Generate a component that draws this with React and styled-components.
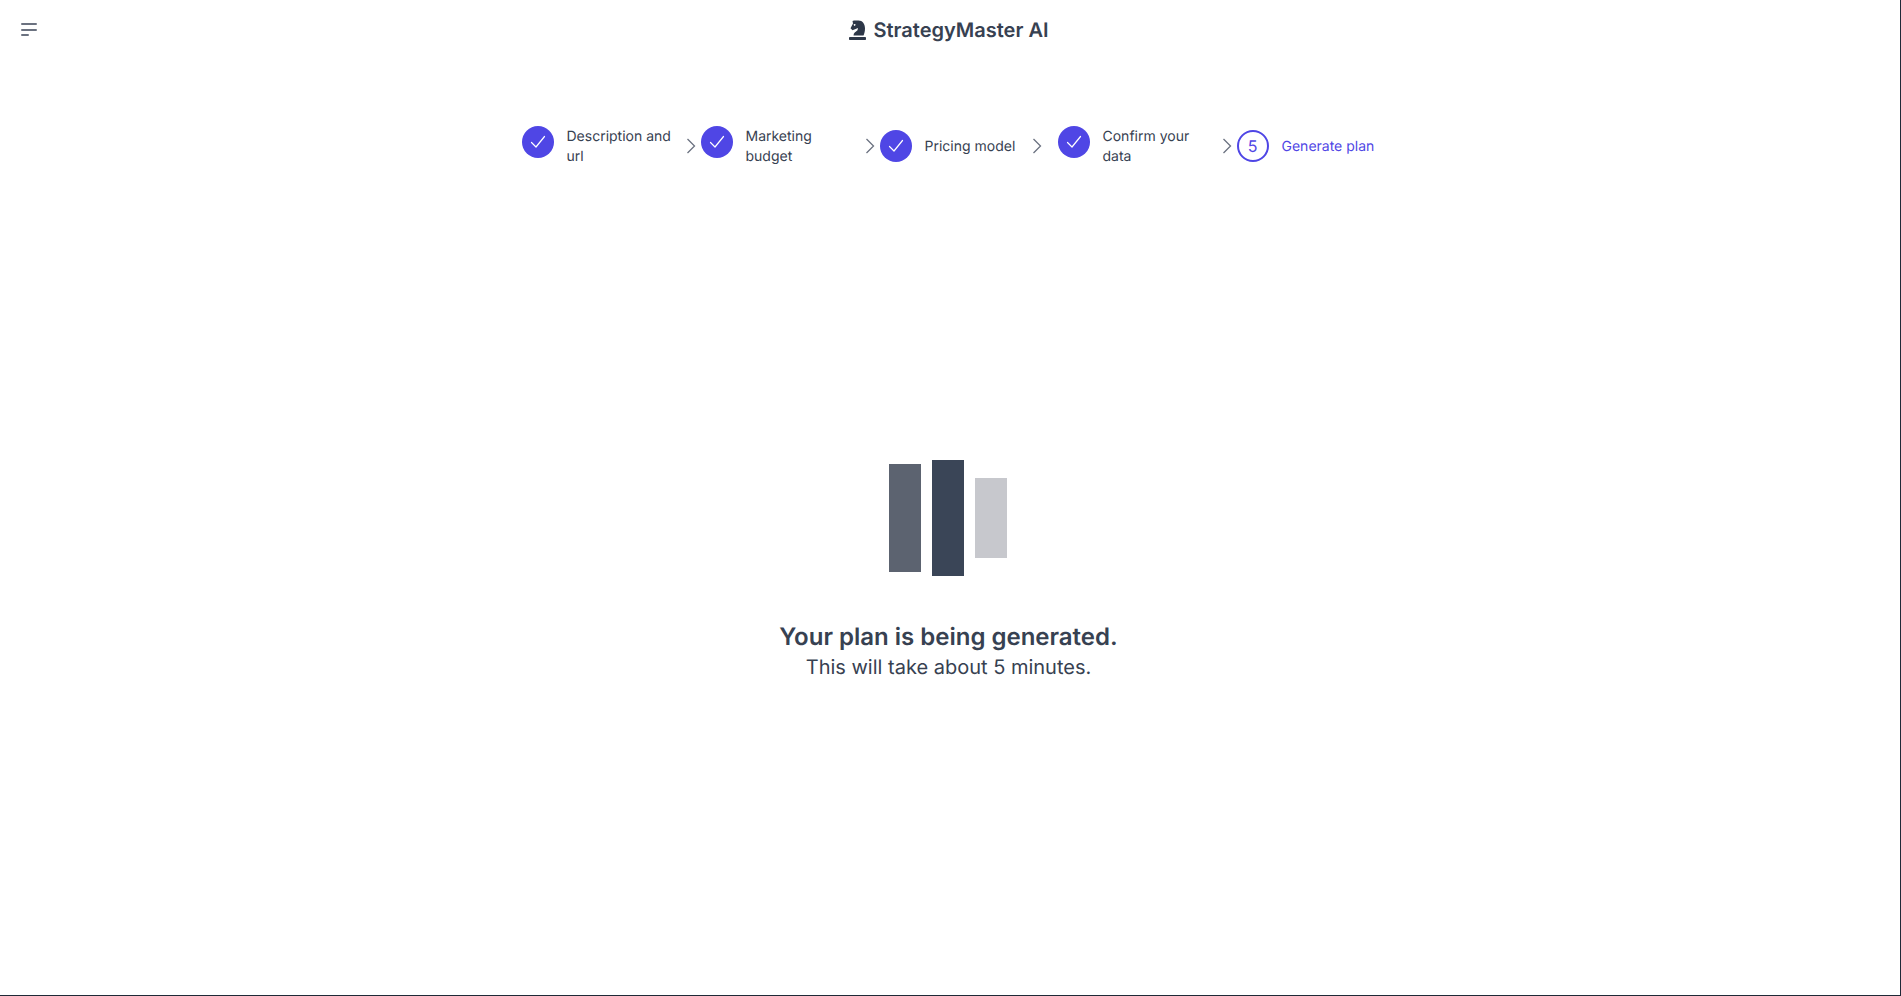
import React from "react";
import styled, { createGlobalStyle } from "styled-components";

const Global = createGlobalStyle`
  html, body { margin: 0; padding: 0; background: #fff; }
  body {
    font-family: Inter, "Liberation Sans", sans-serif;
    color: #374151;
    overflow: hidden;
    text-rendering: geometricPrecision;
  }
  * { box-sizing: border-box; }
`;

const Page = styled.div`
  height: 996px;
  width: 1901px;
  border-right: 1px solid #1f2937;
  border-bottom: 1px solid #1f2937;
  display: flex;
  flex-direction: column;
`;

const Header = styled.header`
  height: 60px;
  padding-right: 2px;
  display: flex;
  align-items: center;
  position: relative;
  justify-content: center;
`;

const MenuButton = styled.button`
  position: absolute;
  left: 21px;
  top: 23px;
  width: 16px;
  height: 13px;
  padding: 0;
  border: 0;
  background: none;
  display: flex;
  flex-direction: column;
  justify-content: space-between;
  align-items: flex-start;
`;

const MenuLine = styled.span`
  display: block;
  height: 2px;
  width: ${(p) => p.$w}px;
  background: #6b7280;
  border-radius: 1px;
`;

const Brand = styled.div`
  display: flex;
  align-items: center;
  gap: 7px;
  font-size: 20px;
  font-weight: 600;
  color: #374151;
  line-height: 28px;
`;

const Stepper = styled.nav`
  width: 857px;
  margin: 66px auto 0;
  display: flex;
  align-items: flex-start;
`;

const Step = styled.div`
  flex: ${(p) => (p.$w ? `0 0 ${p.$w}px` : "1")};
  display: flex;
  align-items: ${(p) => (p.$twoLine ? "flex-start" : "center")};
  height: 40px;
`;

const Circle = styled.div`
  flex: none;
  width: 32px;
  height: 32px;
  border-radius: 50%;
  margin-right: 13px;
  display: flex;
  align-items: center;
  justify-content: center;
  font-size: 16px;
  background: ${(p) => (p.$current ? "#fff" : "#4f46e5")};
  border: ${(p) => (p.$current ? "2px solid #4f46e5" : "0")};
  color: #4f46e5;
`;

const Label = styled.div`
  flex: none;
  width: ${(p) => p.$w}px;
  padding-top: ${(p) => (p.$twoLine ? 1 : 2)}px;
  font-size: 14px;
  line-height: 20px;
  font-weight: 400;
  color: ${(p) => (p.$current ? "#4f46e5" : "#374151")};
`;

const Arrow = styled.svg`
  flex: none;
  width: 10px;
  height: 16px;
  margin-left: 3px;
  align-self: center;
`;

const Main = styled.main`
  flex: 1;
  display: flex;
  flex-direction: column;
  align-items: center;
  padding-top: 294.4px;
  padding-right: 3px;
`;

const Bars = styled.div`
  display: flex;
  align-items: center;
  gap: 10.67px;
  height: 116px;
  margin: 0 1px 44.6px 0;
`;

const Bar = styled.div`
  width: 32px;
  height: ${(p) => p.$h}px;
  background: ${(p) => p.$c};
`;

const Title = styled.h1`
  margin: 0;
  font-size: 24px;
  line-height: 32px;
  font-weight: 600;
  color: #374151;
`;

const Subtitle = styled.p`
  margin: 0;
  font-size: 20px;
  line-height: 28px;
  font-weight: 400;
  color: #374151;
`;

const Check = () => (
  <svg width="16" height="16" viewBox="0 0 16 16" fill="none">
    <path d="M1.5 8.5 L6 13 L14.5 2.5" stroke="#fff" strokeWidth="1.2" strokeLinecap="round" strokeLinejoin="round" />
  </svg>
);

const Knight = () => (
  <svg width="17" height="20" viewBox="0 0 17 20" fill="none">
    <path
      fillRule="evenodd"
      fill="#2d3748"
      d="M5 0.5 H9.5 C13.5 0.5 16 4 16 8.5 C16 11.5 15.2 14 14.5 15.5 H4.5 C4.5 13 6.5 12 8.5 10.3 L9 8 L6 9.3 L3.5 10.3 L1.5 8.3 L4 3.5 L3.5 1 Z M5.6 4 A0.9 0.9 0 1 0 5.61 4 Z"
    />
    <rect x="0" y="17" width="17" height="3" rx="0.8" fill="#2d3748" />
  </svg>
);

const steps = [
  { label: "Description and url", two: true, w: 116, step: 179 },
  { label: "Marketing budget", two: true, w: 116, step: 179 },
  { label: "Pricing model", two: false, w: 104, step: 178 },
  { label: "Confirm your data", two: true, w: 116, step: 179 },
  { label: "Generate plan", two: false, w: 100, current: true },
];

export default function App() {
  return (
    <Page>
      <Global />
      <Header>
        <MenuButton aria-label="Menu">
          <MenuLine $w={16} />
          <MenuLine $w={16} />
          <MenuLine $w={8} />
        </MenuButton>
        <Brand>
          <Knight />
          StrategyMaster AI
        </Brand>
      </Header>
      <Stepper>
        {steps.map((s) => (
          <Step key={s.label} $twoLine={s.two} $w={s.step}>
            <Circle $current={s.current}>{s.current ? "5" : <Check />}</Circle>
            <Label $w={s.w} $twoLine={s.two} $current={s.current}>{s.label}</Label>
            {!s.current && (
              <Arrow viewBox="0 0 10 16" fill="none">
                <path d="M1.5 1 L8.5 8 L1.5 15" stroke="#6b7280" strokeWidth="1.3" />
              </Arrow>
            )}
          </Step>
        ))}
      </Stepper>
      <Main>
        <Bars>
          <Bar $h={108} $c="#5c6370" />
          <Bar $h={116} $c="#3a4557" />
          <Bar $h={80} $c="#c7c8cd" />
        </Bars>
        <Title>Your plan is being generated.</Title>
        <Subtitle>This will take about 5 minutes.</Subtitle>
      </Main>
    </Page>
  );
}
